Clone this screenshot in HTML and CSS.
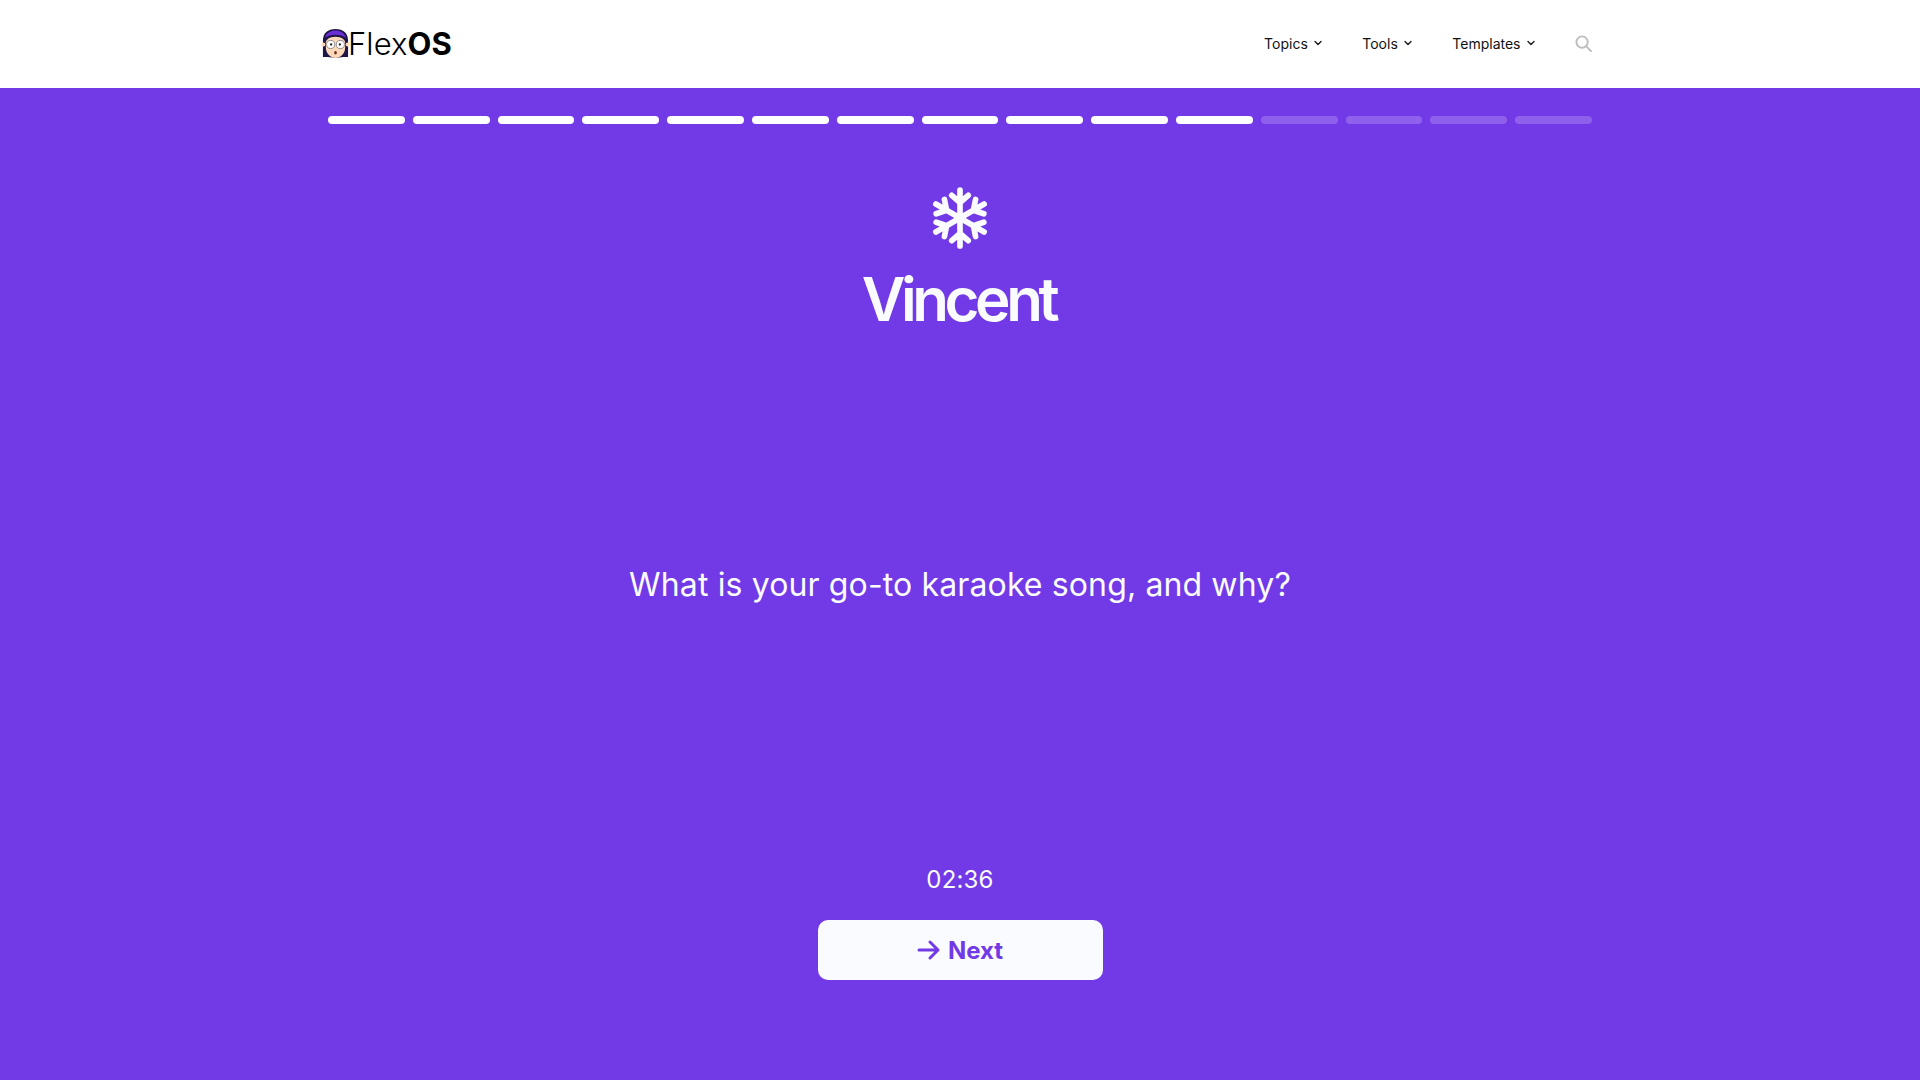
FILE: index.html
```html
<!DOCTYPE html>
<html lang="en">
<head>
<meta charset="utf-8">
<title>FlexOS</title>
<link rel="stylesheet" href="styles.css">
</head>
<body>
<header class="topbar">
  <div class="topbar-inner">
    <a class="brand" href="#">
      <svg class="brand-mark" viewBox="0 0 30 32" aria-hidden="true">
        <path d="M2 30V13C2 5 7 1 15 1s13 4 13 12v17h-5L15 31l-8-1z" fill="#1f1646"/>
        <path d="M4 10C6 5 10 2.500 15 2.500S24 5 26 10c-3-2-6-3-11-3S7 8 4 10z" fill="#6a2fd6"/>
        <circle cx="2.500" cy="17" r="2" fill="#fcd9b8"/>
        <circle cx="27.500" cy="17" r="2" fill="#fcd9b8"/>
        <path d="M5 15c0-3 4-6 10-6s10 3 10 6v5c0 7-5 11-10 11S5 27 5 20z" fill="#fcd9b8"/>
        <circle cx="10" cy="17" r="4.200" fill="#fff" stroke="#8a8a8a" stroke-width="1"/>
        <circle cx="20" cy="17" r="4.200" fill="#fff" stroke="#8a8a8a" stroke-width="1"/>
        <circle cx="10.500" cy="17" r="1.200" fill="#222"/>
        <circle cx="19.500" cy="17" r="1.200" fill="#222"/>
        <ellipse cx="15" cy="25.500" rx="1.400" ry="1.800" fill="#6b2a1e"/>
      </svg>
      <span class="brand-name">Flex<b>OS</b></span>
    </a>
    <nav class="nav">
      <a class="nav-link" href="#">Topics<svg class="chev" viewBox="0 0 10 10"><path d="M2 3.500 5 6.500 8 3.500"/></svg></a>
      <a class="nav-link" href="#">Tools<svg class="chev" viewBox="0 0 10 10"><path d="M2 3.500 5 6.500 8 3.500"/></svg></a>
      <a class="nav-link" href="#">Templates<svg class="chev" viewBox="0 0 10 10"><path d="M2 3.500 5 6.500 8 3.500"/></svg></a>
      <svg class="search" viewBox="0 0 18 18"><circle cx="7.500" cy="7.500" r="6"/><path d="M12 12l5 5"/></svg>
    </nav>
  </div>
</header>
<main class="stage">
  <div class="progress">
    <i class="seg on"></i><i class="seg on"></i><i class="seg on"></i><i class="seg on"></i><i class="seg on"></i>
    <i class="seg on"></i><i class="seg on"></i><i class="seg on"></i><i class="seg on"></i><i class="seg on"></i>
    <i class="seg on"></i><i class="seg"></i><i class="seg"></i><i class="seg"></i><i class="seg"></i>
  </div>
  <svg class="flake" viewBox="0 0 56 60" aria-hidden="true">
    <g class="arm"><path d="M28 30V3M20 8l8 7 8-7"/></g>
    <g class="arm" transform="rotate(60 28 30)"><path d="M28 30V3M20 8l8 7 8-7"/></g>
    <g class="arm" transform="rotate(120 28 30)"><path d="M28 30V3M20 8l8 7 8-7"/></g>
    <g class="arm" transform="rotate(180 28 30)"><path d="M28 30V3M20 8l8 7 8-7"/></g>
    <g class="arm" transform="rotate(240 28 30)"><path d="M28 30V3M20 8l8 7 8-7"/></g>
    <g class="arm" transform="rotate(300 28 30)"><path d="M28 30V3M20 8l8 7 8-7"/></g>
  </svg>
  <h1 class="name">Vincent</h1>
  <div class="question-wrap"><p class="question">What is your go-to karaoke song, and why?</p></div>
  <div class="timer">02:36</div>
  <button class="next" type="button">
    <svg class="next-arrow" viewBox="0 0 24 24"><path d="M2 12h19M13 4l8 8-8 8"/></svg><span class="next-label">Next</span>
  </button>
</main>
</body>
</html>
```
FILE: styles.css
```css
* { box-sizing: border-box; }
html, body { margin: 0; height: 100%; }
body { font-family: Inter, "Liberation Sans", sans-serif; display: flex; flex-direction: column; height: 1080px; overflow: hidden; background: #7239e6; }
.topbar { height: 88px; background: #fff; flex: none; }
.topbar-inner { width: 1272px; margin: 0 auto; height: 100%; display: flex; align-items: center; justify-content: space-between; }
.brand { display: flex; align-items: center; text-decoration: none; color: #000; margin: -1px 0 0 -3px; }
.brand-mark { width: 29px; height: 31px; }
.brand-name { font-size: 31px; line-height: 36px; font-family: Inter, sans-serif; font-weight: 300; margin-left: -2px; letter-spacing: .1px; }
.brand-name b { font-weight: 700; }
.nav { display: flex; align-items: center; margin: -2px 4px 0 0; }
.nav-link { display: flex; align-items: center; font-size: 14px; font-weight: 400; color: #111; text-decoration: none; margin-right: 39.5px; }
.chev { width: 10px; height: 10px; margin-left: 5px; fill: none; stroke: #1a1a1a; stroke-width: 1.4; stroke-linecap: round; stroke-linejoin: round; }
.search { width: 17px; height: 17px; fill: none; stroke: #bdbdbd; stroke-width: 2; stroke-linecap: round; }
.stage { flex: 1; display: flex; flex-direction: column; align-items: center; color: #f9fbff; }
.progress { width: 1264px; display: flex; gap: 8px; margin-top: 28px; }
.seg { flex: 1; height: 7.5px; border-radius: 4px; background: rgba(255,255,255,.2); }
.seg.on { background: #fff; }
.flake { width: 58px; height: 62px; margin-top: 63.5px; }
.arm path { fill: none; stroke: #f9fbff; stroke-width: 5.5; stroke-linecap: round; stroke-linejoin: round; }
.name { margin: 14px 0 0 -3px; font-size: 60px; line-height: 72px; font-weight: 600; letter-spacing: -4.4px; }
.question-wrap { height: 499px; display: flex; align-items: center; }
.question { margin: 0; font-size: 32px; line-height: 40px; font-weight: 400; letter-spacing: .13px; }
.timer { font-size: 24px; line-height: 32px; font-weight: 400; margin-top: 30px; letter-spacing: .2px; }
.next { margin-top: 24px; width: 285px; height: 60px; border: 0; border-radius: 10px; background: #f9fbff; color: #7239e6; font: 700 24px/32px Inter, sans-serif; display: flex; align-items: center; justify-content: center; gap: 7px; }
.next-label { padding-top: 2px; }
.next-arrow { width: 24px; height: 24px; fill: none; stroke: #7239e6; stroke-width: 3; stroke-linecap: round; stroke-linejoin: round; }
```
